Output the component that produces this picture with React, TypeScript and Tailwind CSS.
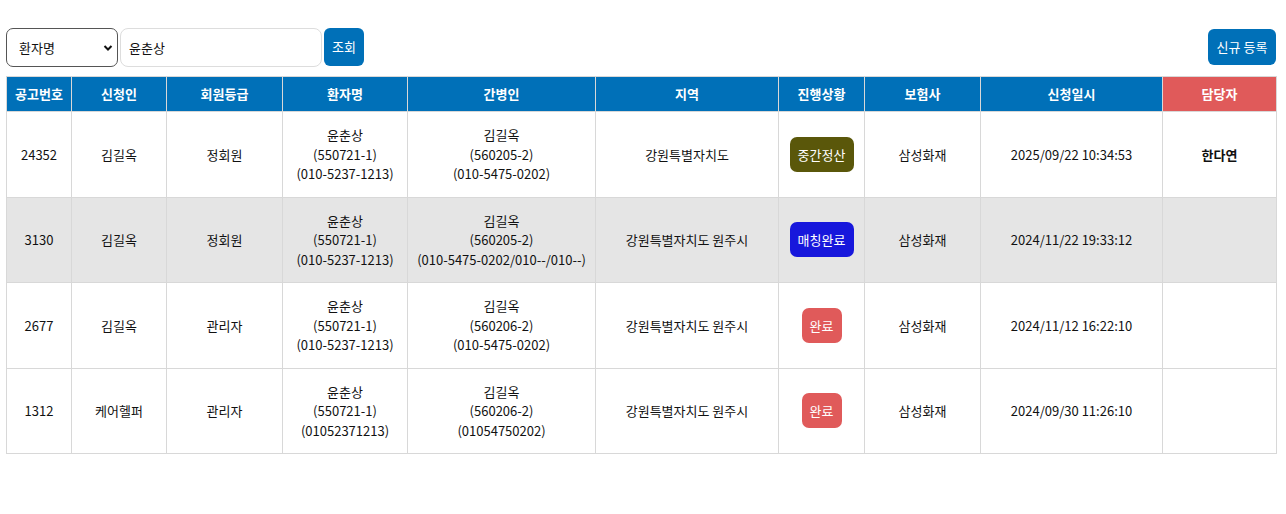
import React from "react";

const font = { fontFamily: '"Noto Sans CJK KR", "Noto Sans", sans-serif' };

type Row = {
  no: string;
  applicant: string;
  grade: string;
  patient: string[];
  carer: string[];
  region: string;
  status: { label: string; cls: string };
  insurer: string;
  date: string;
  manager: string;
  gray?: boolean;
};

const rows: Row[] = [
  {
    no: "24352",
    applicant: "김길옥",
    grade: "정회원",
    patient: ["윤춘상", "(550721-1)", "(010-5237-1213)"],
    carer: ["김길옥", "(560205-2)", "(010-5475-0202)"],
    region: "강원특별자치도",
    status: { label: "중간정산", cls: "bg-[#5a570a] w-[64px]" },
    insurer: "삼성화재",
    date: "2025/09/22 10:34:53",
    manager: "한다연",
  },
  {
    no: "3130",
    applicant: "김길옥",
    grade: "정회원",
    patient: ["윤춘상", "(550721-1)", "(010-5237-1213)"],
    carer: ["김길옥", "(560205-2)", "(010-5475-0202/010--/010--)"],
    region: "강원특별자치도 원주시",
    status: { label: "매칭완료", cls: "bg-[#1717dc] w-[64px]" },
    insurer: "삼성화재",
    date: "2024/11/22 19:33:12",
    manager: "",
    gray: true,
  },
  {
    no: "2677",
    applicant: "김길옥",
    grade: "관리자",
    patient: ["윤춘상", "(550721-1)", "(010-5237-1213)"],
    carer: ["김길옥", "(560206-2)", "(010-5475-0202)"],
    region: "강원특별자치도 원주시",
    status: { label: "완료", cls: "bg-[#e05a5a] w-[40px]" },
    insurer: "삼성화재",
    date: "2024/11/12 16:22:10",
    manager: "",
  },
  {
    no: "1312",
    applicant: "케어헬퍼",
    grade: "관리자",
    patient: ["윤춘상", "(550721-1)", "(01052371213)"],
    carer: ["김길옥", "(560206-2)", "(01054750202)"],
    region: "강원특별자치도 원주시",
    status: { label: "완료", cls: "bg-[#e05a5a] w-[40px]" },
    insurer: "삼성화재",
    date: "2024/09/30 11:26:10",
    manager: "",
  },
];

const headers = [
  "공고번호",
  "신청인",
  "회원등급",
  "환자명",
  "간병인",
  "지역",
  "진행상황",
  "보험사",
  "신청일시",
];

const widths = [65, 95, 116, 125, 188, 183, 86, 116, 182, 114];

export default function App() {
  return (
    <div className="w-[1286px] h-[514px] bg-white text-[13px] text-[#111]" style={font}>
      <div className="pt-[28px] ml-[6px] w-[1270px] flex items-start justify-between">
        <div className="flex items-start gap-[2px]">
          <div className="relative w-[112px] h-[39px] border border-[#555] rounded-[7px] flex items-center pl-[12px]">
            <span>환자명</span>
            <svg className="absolute right-[4px] top-[14px]" width="10" height="10" viewBox="0 0 10 10">
              <path d="M1.5 3 L5 6.5 L8.5 3" fill="none" stroke="#111" strokeWidth="2" />
            </svg>
          </div>
          <div className="w-[202px] h-[39px] border border-[#ddd] rounded-[8px] flex items-center pl-[8px]">
            윤춘상
          </div>
          <button className="w-[40px] h-[38px] bg-[#0070b8] text-white rounded-[6px] text-[13px]">
            조회
          </button>
        </div>
        <button className="mt-[1px] w-[68px] h-[36px] bg-[#0070b8] text-white rounded-[6px] text-[13px]">
          신규 등록
        </button>
      </div>
      <div className="px-[6px] mt-[9px]">
        <table className="table-fixed border-collapse w-[1270px]">
          <colgroup>
            {widths.map((w, i) => (
              <col key={i} style={{ width: w }} />
            ))}
          </colgroup>
          <thead>
            <tr className="h-[35px]">
              {headers.map((h) => (
                <th key={h} className="bg-[#0070b8] text-white font-bold border border-[#d8d8d8] p-0">
                  {h}
                </th>
              ))}
              <th className="bg-[#e05a5a] text-white font-bold border border-[#d8d8d8] p-0">담당자</th>
            </tr>
          </thead>
          <tbody>
            {rows.map((r, i) => (
              <tr
                key={i}
                className={
                  "h-[85.5px] text-center leading-[19.5px] " +
                  (r.gray ? "bg-[#e5e5e5] border-t border-t-[#c0c0c0]" : "bg-white")
                }
              >
                <td className="border border-[#d8d8d8] p-0">{r.no}</td>
                <td className="border border-[#d8d8d8] p-0">{r.applicant}</td>
                <td className="border border-[#d8d8d8] p-0">{r.grade}</td>
                <td className="border border-[#d8d8d8] p-0">
                  {r.patient.map((l, j) => (
                    <div key={j}>{l}</div>
                  ))}
                </td>
                <td className="border border-[#d8d8d8] p-0">
                  {r.carer.map((l, j) => (
                    <div key={j}>{l}</div>
                  ))}
                </td>
                <td className="border border-[#d8d8d8] p-0">{r.region}</td>
                <td className="border border-[#d8d8d8] p-0">
                  <div className="flex justify-center">
                    <span
                      className={
                        "h-[35px] rounded-[7px] text-white flex items-center justify-center " + r.status.cls
                      }
                    >
                      {r.status.label}
                    </span>
                  </div>
                </td>
                <td className="border border-[#d8d8d8] p-0">{r.insurer}</td>
                <td className="border border-[#d8d8d8] p-0">{r.date}</td>
                <td className="border border-[#d8d8d8] p-0 font-bold">{r.manager}</td>
              </tr>
            ))}
          </tbody>
        </table>
      </div>
    </div>
  );
}
